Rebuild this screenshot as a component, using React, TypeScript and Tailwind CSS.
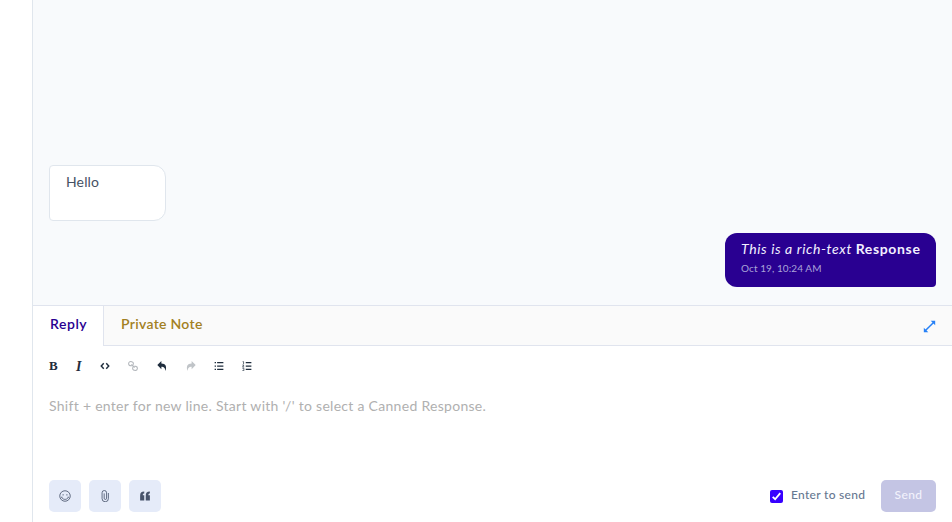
import React from "react";

function Icon({ children, className, box = "0 0 16 16" }: { children: React.ReactNode; className: string; box?: string }) {
  return (
    <svg viewBox={box} className={className} fill="none" stroke="currentColor">
      {children}
    </svg>
  );
}

function Conversation() {
  return (
    <section className="flex h-[305px] flex-col justify-end bg-[#f8fafc] pr-4 pb-[18px] pl-4">
      <div className="h-14 w-[117px] rounded-l-[4px] rounded-r-[12px] border border-[#e0e6ed] bg-white px-4 pt-[5px] text-[14px] leading-[21px] tracking-[0.15px] text-[#465163]">
        Hello
      </div>
      <div className="mt-3 h-[54px] w-[211px] self-end rounded-[12px] rounded-br-[4px] bg-[#290091] px-4 pt-[5px] whitespace-nowrap text-[#f3f0ff]">
        <p className="text-[14px] leading-[21px]">
          <em className="tracking-[0.62px]">This is a rich-text</em> <strong className="tracking-[0.65px]">Response</strong>
        </p>
        <p className="mt-px text-[10px] leading-4 tracking-[0.08px] text-[#aaa3d8]">Oct 19, 10:24 AM</p>
      </div>
    </section>
  );
}

function Toolbar() {
  return (
    <div className="flex h-10 items-center text-[#1f2d3d]">
      <span className="ml-4 w-[27px] font-['Liberation_Serif',serif] text-[13px] font-bold">B</span>
      <span className="w-6 font-['Liberation_Serif',serif] text-[14px] font-bold italic">I</span>
      <Icon className="h-[10px] w-[10px]">
        <path strokeWidth="2.3" d="M6 3.500 2 8l4 4.500M10 3.500l4 4.500-4 4.500" />
      </Icon>
      <Icon className="ml-[18px] h-[10px] w-[10px] text-[#b4b8bd]">
        <g strokeWidth="1.7">
          <rect x="1" y="1" width="7.500" height="6.500" rx="3" transform="rotate(10 4.500 4.500)" />
          <rect x="7.500" y="8.500" width="7.500" height="6.500" rx="3" transform="rotate(10 11.500 11.500)" />
          <path d="m5.500 5.500 5 5" />
        </g>
      </Icon>
      <Icon className="ml-[19px] h-[10px] w-[10px]">
        <path fill="currentColor" stroke="none" d="M7 0v4c7 0 9 5 6.500 12C13 10.500 11 9 7 9v4L.5 6.500Z" />
      </Icon>
      <Icon className="ml-[19px] h-[10px] w-[10px] text-[#c0c4c8]">
        <path fill="currentColor" stroke="none" d="M9 0v4C2 4 0 9 2.500 16 3 10.500 5 9 9 9v4l6.500-6.500Z" />
      </Icon>
      <Icon className="ml-[18px] h-[10px] w-[10px]">
        <path strokeWidth="2" d="M5 2.500h10M5 8h10M5 13.500h10M1 2.500h2.200M1 8h2.200M1 13.500h2.200" />
      </Icon>
      <Icon className="ml-[18px] h-[10px] w-[10px]">
        <path strokeWidth="2" d="M6 2.500h9M6 8h9M6 13.500h9" />
        <path strokeWidth="1.1" d="M1 1h1.500v4M.5 6.500h2.500L1 9.500h2.500M.5 11.500h2.500v4H.5" />
      </Icon>
    </div>
  );
}

function Square({ children }: { children: React.ReactNode }) {
  return <button className="flex h-8 w-8 items-center justify-center rounded-[5px] bg-[#e5ebf9] text-[#47536b]">{children}</button>;
}

function Footer() {
  return (
    <div className="flex h-8 items-center gap-2 px-4">
      <Square>
        <Icon className="h-3 w-3">
          <circle cx="8" cy="8" r="7" strokeWidth="1.100" />
          <path strokeWidth="1" d="M3.500 9.500c1.200 4 7.800 4 9 0M3 9.500h1.500M11.500 9.500H13M4.500 6.500h2M9.500 6.500h2" />
        </Icon>
      </Square>
      <Square>
        <Icon className="h-3 w-3">
          <path strokeWidth="1.100" d="M12.500 4v7.500a4.200 4.200 0 0 1-8.400 0V3.700a3 3 0 0 1 6 0v7.300a1.600 1.600 0 0 1-3.200 0V4.500" />
        </Icon>
      </Square>
      <Square>
        <Icon className="h-3 w-3">
          <path fill="currentColor" stroke="none" d="M7 2v2.500c-1.500 0-2 .8-2 2.500h2v7H1.500V7.500C1.500 4 3 2 7 2ZM14.500 2v2.500c-1.500 0-2 .8-2 2.500h2v7H9V7.500C9 4 10.500 2 14.500 2Z" />
        </Icon>
      </Square>
      <label className="ml-auto flex items-center gap-2 text-[12px] font-medium tracking-[0.3px] whitespace-nowrap text-[#667891]">
        <span className="mt-px flex h-[13px] w-[13px] items-center justify-center rounded-[2px] bg-[#3700ff] text-white">
          <Icon className="h-[11px] w-[11px]">
            <path strokeWidth="2.700" d="m2.500 8.500 3.500 3.500 7.500-9" />
          </Icon>
        </span>
        <span className="-mt-[2px] w-[74px]">Enter to send</span>
      </label>
      <button className="ml-2 h-8 w-[55px] rounded-[5px] bg-[#c4c5e4] pb-[2px] text-[12px] font-medium tracking-[0.4px] text-[#f2f2fc]">Send</button>
    </div>
  );
}

export default function App() {
  return (
    <div className="flex h-[522px] w-[952px] overflow-hidden bg-white font-['Lato',sans-serif]">
      <aside className="w-[33px] shrink-0 border-r border-[#e0e6ed]" />
      <main className="flex flex-1 flex-col">
        <Conversation />
        <nav className="flex h-[41px] border-t border-[#e0e4ee] bg-[#fafafa] text-[14px] font-semibold">
          <div className="w-[71px] border-r border-[#e0e4ee] bg-white pt-[7px] pl-[17px] leading-[21px] tracking-[0.55px] text-[#290091]">Reply</div>
          <div className="flex flex-1 items-start justify-between border-b border-[#e0e4ee] pt-[7px] pr-4 pl-[17px]">
            <span className="leading-[21px] tracking-[0.3px] text-[#a28022]">Private Note</span>
            <Icon className="mt-[7px] h-[13px] w-[13px] text-[#2781f6]">
              <path strokeWidth="1.800" d="m3 13 10-10" />
              <path fill="currentColor" stroke="none" d="M9.500 1h5.500v5.500ZM1 9.500V15h5.500Z" />
            </Icon>
          </div>
        </nav>
        <Toolbar />
        <p className="h-[94px] px-4 pt-[9px] text-[14px] leading-[21px] tracking-[0.288px] text-[#b0b0b0]">
          Shift + enter for new line. Start with '/' to select a Canned Response.
        </p>
        <Footer />
      </main>
    </div>
  );
}
